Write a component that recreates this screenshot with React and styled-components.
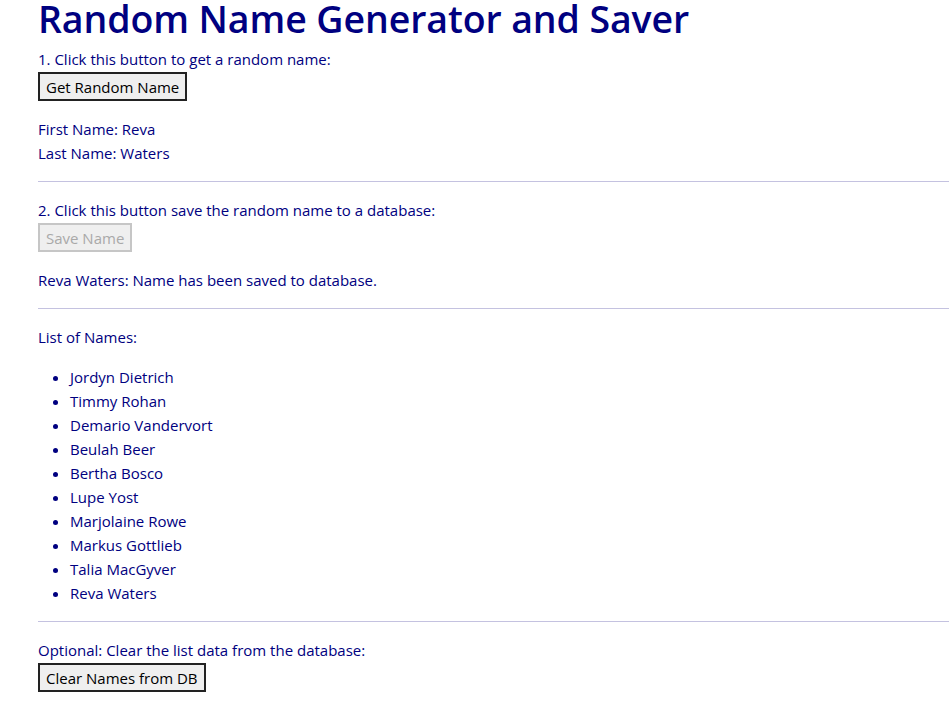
import React from "react";
import styled, { createGlobalStyle } from "styled-components";

const Global = createGlobalStyle`
  html, body { margin: 0; padding: 0; background: #fff; overflow: hidden; }
  body { font-family: "Open Sans", "Noto Sans", sans-serif; color: #000080; }
`;

const Page = styled.main`
  padding: 0 0 0 38px;
  font-size: 15px;
  line-height: 24px;
`;

const Title = styled.h1`
  margin: 0 0 9px;
  font-size: 37.5px;
  line-height: 38px;
  font-weight: 600;
  letter-spacing: -0.1px;
  color: #000080;
  white-space: nowrap;
`;

const Section = styled.section`
  display: flex;
  flex-direction: column;
  align-items: flex-start;
`;

const Label = styled.div``;

const Button = styled.button`
  font-family: inherit;
  font-size: 15px;
  line-height: 20px;
  height: 29px;
  margin-top: 1px;
  padding: 0 6px;
  background: #efefef;
  color: ${(p) => (p.disabled ? "#a9a9a9" : "#000")};
  border: 2px solid ${(p) => (p.disabled ? "#c6c6c6" : "#222")};
  border-radius: 0;
`;

const Para = styled.p`
  margin: 16px 0;
`;

const Rule = styled.hr`
  margin: 0;
  border: 0;
  border-top: 1px solid #c4c2e0;
  width: 100%;
`;

const Body = styled.div`
  margin: 16px 0;
`;

const List = styled.ul`
  margin: 16px 0;
  padding-left: 32px;
`;

const Item = styled.li``;

const names = [
  "Jordyn Dietrich",
  "Timmy Rohan",
  "Demario Vandervort",
  "Beulah Beer",
  "Bertha Bosco",
  "Lupe Yost",
  "Marjolaine Rowe",
  "Markus Gottlieb",
  "Talia MacGyver",
  "Reva Waters",
];

export default function App() {
  return (
    <>
      <Global />
      <Page>
        <Title>Random Name Generator and Saver</Title>
        <Section>
          <Label>1. Click this button to get a random name:</Label>
          <Button>Get Random Name</Button>
        </Section>
        <Para>
          First Name: Reva
          <br />
          Last Name: Waters
        </Para>
        <Rule />
        <Body>
          <Section>
            <Label>2. Click this button save the random name to a database:</Label>
            <Button disabled>Save Name</Button>
          </Section>
          <Para>Reva Waters: Name has been saved to database.</Para>
        </Body>
        <Rule />
        <Body>
          <Label>List of Names:</Label>
          <List>
            {names.map((n) => (
              <Item key={n}>{n}</Item>
            ))}
          </List>
        </Body>
        <Rule />
        <Body>
          <Section>
            <Label>Optional: Clear the list data from the database:</Label>
            <Button>Clear Names from DB</Button>
          </Section>
        </Body>
      </Page>
    </>
  );
}
